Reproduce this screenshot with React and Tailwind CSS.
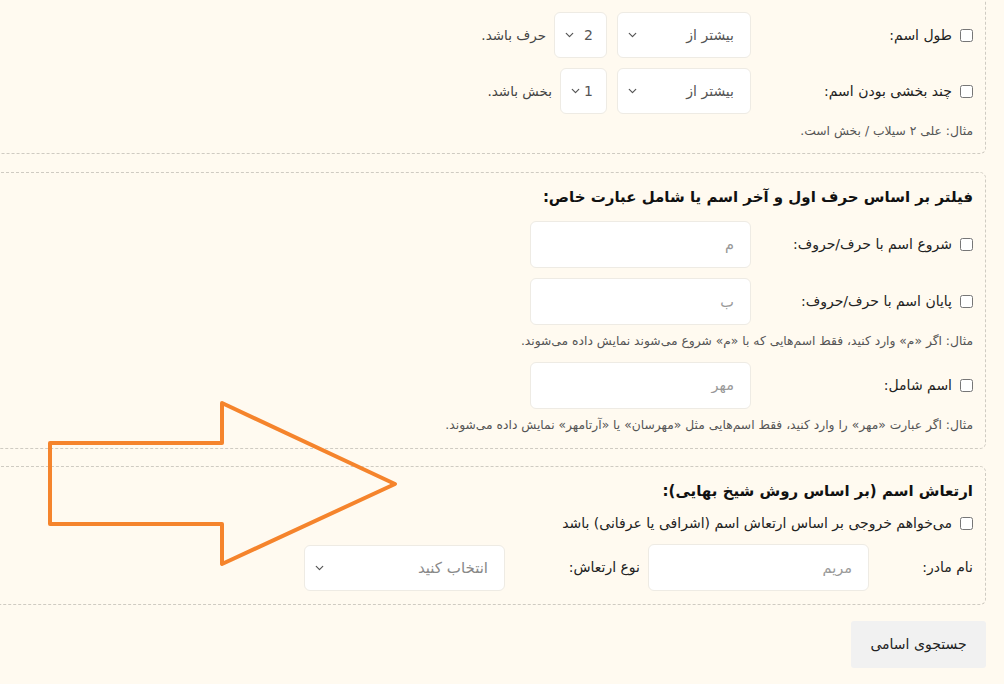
import React from "react";
import { ChevronDown } from "lucide-react";

const font = { fontFamily: '"DejaVu Sans", "Noto Sans", sans-serif' };

const Select = ({ value, placeholder, className = "", pad = "pr-4" }) => (
  <div className={`relative h-[46px] ${className}`}>
    <div
      className={`flex h-full items-center rounded-md border border-[#eeebe4] bg-white ${pad} ${
        placeholder ? "text-[15px] text-[#888]" : "text-[14px] text-[#555]"
      }`}
    >
      <span>{value}</span>
    </div>
    <ChevronDown className="absolute left-[9px] top-1/2 h-[13px] w-[13px] -translate-y-1/2 text-[#555]" strokeWidth={2.2} />
  </div>
);

const TextBox = ({ placeholder, className = "w-[221px]" }) => (
  <input
    type="text"
    placeholder={placeholder}
    className={`h-[47px] rounded-md border border-[#eeebe4] bg-white px-4 text-[14.5px] placeholder:text-[#999] focus:outline-none ${className}`}
  />
);

const CheckLabel = ({ text }) => (
  <label className="flex w-[222px] shrink-0 items-center gap-[8px] text-[14px] text-[#222]">
    <input type="checkbox" className="m-0 h-[13px] w-[13px]" />
    <span>{text}</span>
  </label>
);

const Hint = ({ children }) => (
  <p className="text-[12.3px] text-[#555]">{children}</p>
);

const Section = ({ className = "", children }) => (
  <div className={`rounded-md border border-dashed border-[#cfcbc2] pr-[12px] ${className}`}>
    {children}
  </div>
);

export default function App() {
  return (
    <div dir="rtl" style={font} className="relative h-[684px] w-[1004px] overflow-hidden bg-[#fffaf0]">
      <div className="-ml-[20px] mr-[18px]">
        <Section className="-mt-[12px] pb-[13px] pt-[23px]">
          <div className="flex items-center">
            <CheckLabel text="طول اسم:" />
            <Select value="بیشتر از" className="w-[134px]" />
            <Select value="2" pad="pr-[13px]" className="mr-[10px] w-[53px]" />
            <span className="mr-[8px] text-[13.5px] text-[#444]">حرف باشد.</span>
          </div>
          <div className="mt-[10px] flex items-center">
            <CheckLabel text="چند بخشی بودن اسم:" />
            <Select value="بیشتر از" className="w-[134px]" />
            <Select value="1" pad="pr-[13px]" className="mr-[10px] w-[47px]" />
            <span className="mr-[8px] text-[13.5px] text-[#444]">بخش باشد.</span>
          </div>
          <div className="mt-[8px]">
            <Hint>مثال: علی ۲ سیلاب / بخش است.</Hint>
          </div>
        </Section>

        <Section className="mt-[18px] pb-[14px] pt-[11px]">
          <h3 className="text-[15px] font-semibold leading-[26px] text-[#111]">
            فیلتر بر اساس حرف اول و آخر اسم یا شامل عبارت خاص:
          </h3>
          <div className="mt-[11px] flex items-center">
            <CheckLabel text="شروع اسم با حرف/حروف:" />
            <TextBox placeholder="م" />
          </div>
          <div className="mt-[10px] flex items-center">
            <CheckLabel text="پایان اسم با حرف/حروف:" />
            <TextBox placeholder="ب" />
          </div>
          <div className="mt-[7px]">
            <Hint>مثال: اگر «م» وارد کنید، فقط اسم‌هایی که با «م» شروع می‌شوند نمایش داده می‌شوند.</Hint>
          </div>
          <div className="mt-[11px] flex items-center">
            <CheckLabel text="اسم شامل:" />
            <TextBox placeholder="مهر" />
          </div>
          <div className="mt-[7px]">
            <Hint>مثال: اگر عبارت «مهر» را وارد کنید، فقط اسم‌هایی مثل «مهرسان» یا «آرتامهر» نمایش داده می‌شوند.</Hint>
          </div>
        </Section>

        <Section className="mt-[17px] pb-[13px] pt-[11px]">
          <h3 className="text-[15px] font-semibold leading-[26px] text-[#111]">
            ارتعاش اسم (بر اساس روش شیخ بهایی):
          </h3>
          <label className="mt-[9px] flex items-center gap-[8px] text-[14px] text-[#222]">
            <input type="checkbox" className="m-0 h-[13px] w-[13px]" />
            <span>می‌خواهم خروجی بر اساس ارتعاش اسم (اشرافی یا عرفانی) باشد</span>
          </label>
          <div className="mt-[10px] flex items-center">
            <span className="w-[104px] shrink-0 text-[14px] text-[#222]">نام مادر:</span>
            <TextBox placeholder="مریم" />
            <span className="w-[143px] shrink-0 pr-[8px] text-[14px] text-[#222]">نوع ارتعاش:</span>
            <Select value="انتخاب کنید" placeholder className="w-[201px]" />
          </div>
        </Section>

        <div className="mt-[16px] flex">
          <button className="h-[47px] w-[135px] rounded-[3px] bg-[#f1f1f1] text-[14px] text-[#222]">
            جستجوی اسامی
          </button>
        </div>
      </div>

      <svg className="pointer-events-none absolute left-[40px] top-[395px]" width="370" height="180" viewBox="0 0 370 180">
        <polygon
          points="10,48 182,48 182,8 355,89 182,169 182,129 10,129"
          fill="none"
          stroke="#f5842c"
          strokeWidth="4"
          strokeLinejoin="round"
        />
      </svg>
    </div>
  );
}
